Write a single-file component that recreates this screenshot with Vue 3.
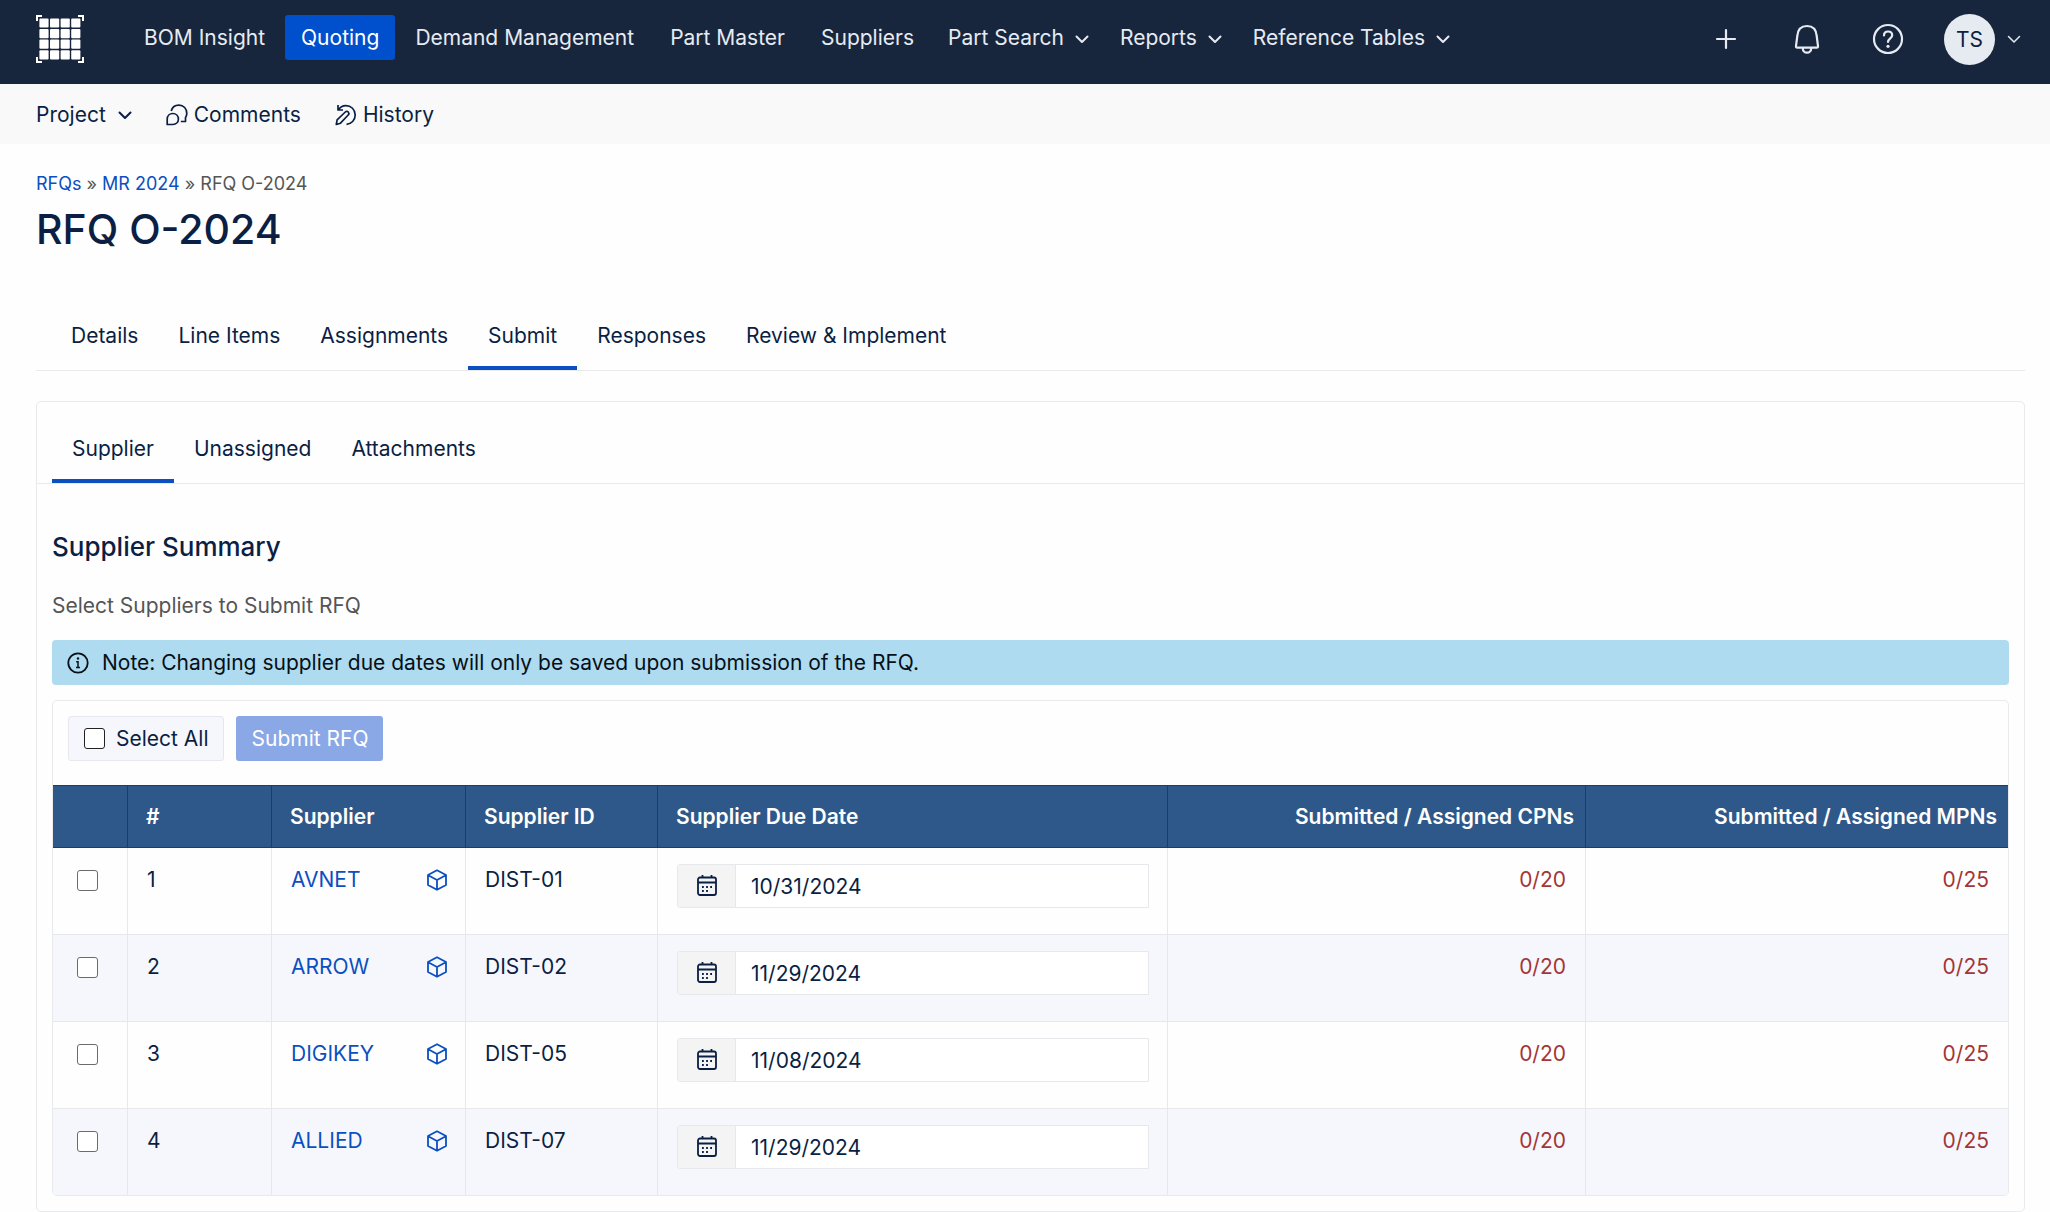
<script setup>
import { ref } from 'vue'

const navItems = [
  { label: 'BOM Insight' },
  { label: 'Quoting', active: true },
  { label: 'Demand Management' },
  { label: 'Part Master' },
  { label: 'Suppliers' },
  { label: 'Part Search', menu: true },
  { label: 'Reports', menu: true },
  { label: 'Reference Tables', menu: true }
]

const pageTabs = ['Details', 'Line Items', 'Assignments', 'Submit', 'Responses', 'Review & Implement']
const activePageTab = ref('Submit')

const cardTabs = ['Supplier', 'Unassigned', 'Attachments']
const activeCardTab = ref('Supplier')

const suppliers = ref([
  { name: 'AVNET', id: 'DIST-01', due: '10/31/2024', cpns: '0/20', mpns: '0/25', selected: false },
  { name: 'ARROW', id: 'DIST-02', due: '11/29/2024', cpns: '0/20', mpns: '0/25', selected: false },
  { name: 'DIGIKEY', id: 'DIST-05', due: '11/08/2024', cpns: '0/20', mpns: '0/25', selected: false },
  { name: 'ALLIED', id: 'DIST-07', due: '11/29/2024', cpns: '0/20', mpns: '0/25', selected: false }
])

const logoCells = [0, 1, 2, 3]
</script>

<template>
  <div class="page">
    <header class="topbar">
      <a href="#" class="logo" aria-label="Home">
        <svg width="48" height="48" viewBox="0 0 48 48">
          <g fill="#fff">
            <template v-for="r in logoCells" :key="r">
              <rect
                v-for="c in logoCells"
                :key="c"
                :x="3.4 + c * 10.6"
                :y="3.4 + r * 10.6"
                width="9.2"
                height="9.2"
                rx="1"
              />
            </template>
          </g>
          <path
            d="M1 6V1h5M42 1h5v5M47 42v5h-5M6 47H1v-5"
            fill="none"
            stroke="#fff"
            stroke-width="2"
          />
        </svg>
      </a>
      <nav class="main-nav" aria-label="Main">
        <a
          v-for="item in navItems"
          :key="item.label"
          href="#"
          class="nav-link"
          :class="{ active: item.active, menu: item.menu }"
        >
          {{ item.label }}
          <svg v-if="item.menu" class="chevron" width="14" height="14" viewBox="0 0 14 14" stroke-width="2">
            <path d="M1.5 4.5 7 10l5.5-5.5" />
          </svg>
        </a>
      </nav>
      <div class="tools">
        <button type="button" class="tool" aria-label="Add">
          <svg width="32" height="32" viewBox="0 0 32 32" stroke-width="2.2"><path d="M16 7v18M7 16h18" /></svg>
        </button>
        <button type="button" class="tool" aria-label="Notifications">
          <svg width="32" height="32" viewBox="0 0 32 32" stroke-width="2.2">
            <path d="M16 3C9.5 3 6.7 7.5 6.3 13L5 23c-.1 1.2.3 1.7 1.3 1.7h19.400c1 0 1.4-.5 1.3-1.7l-1.3-10C25.3 7.5 22.5 3 16 3zM11.8 25.5a4.2 4.2 0 0 0 8.4 0" />
          </svg>
        </button>
        <button type="button" class="tool" aria-label="Help">
          <svg width="32" height="32" viewBox="0 0 32 32" stroke-width="2.2">
            <circle cx="16" cy="16" r="14" />
            <path d="M12 12.5c0-2.4 1.7-4 4.1-4s4.1 1.5 4.1 3.7c0 3-4.2 3.3-4.2 6.8" />
            <circle cx="16" cy="23.3" r="1.6" class="dot" />
          </svg>
        </button>
        <button type="button" class="user" aria-label="Account">
          <span class="avatar">TS</span>
          <svg class="chevron" width="14" height="14" viewBox="0 0 14 14" stroke-width="1.5">
            <path d="M1.5 4.5 7 10l5.5-5.5" />
          </svg>
        </button>
      </div>
    </header>

    <div class="subbar">
      <button type="button" class="sub-item project">
        Project
        <svg class="chevron" width="14" height="14" viewBox="0 0 14 14" stroke-width="2">
          <path d="M1.5 4.5 7 10l5.5-5.5" />
        </svg>
      </button>
      <button type="button" class="sub-item">
        <svg class="line-icon" width="22" height="22" viewBox="0 0 22 22" stroke-width="1.7">
          <path d="M5.200 7A8 8 0 0 1 13 1.200c4.600 0 7.800 3.500 7.800 8 0 1.800-.6 3.200-1.300 4.400v3.900h-4.700" />
          <path d="M1.200 20.500v-5.300c0-3.300 2.400-5.700 5.600-5.700s5.600 2.400 5.600 5.600-2.400 5.400-5.600 5.400z" />
        </svg>
        Comments
      </button>
      <button type="button" class="sub-item">
        <svg class="line-icon" width="22" height="22" viewBox="0 0 22 22" stroke-width="1.7">
          <path d="M3 1v5h5M3.300 6C5 3.200 7.600 1.600 10.800 1.600c5.300 0 9.400 4 9.400 9.300 0 5.200-3.900 9.200-8.700 9.400" />
          <path d="m1.300 20.500.8-4.600L10.300 8c1-1 2.200-.9 3 0s.8 2-.1 3L5.500 19.200z" />
        </svg>
        History
      </button>
    </div>

    <main class="content">
      <nav class="breadcrumb" aria-label="Breadcrumb">
        <a href="#">RFQs</a> » <a href="#">MR 2024</a> » <span>RFQ O-2024</span>
      </nav>
      <h1>RFQ O-2024</h1>

      <div class="tabs page-tabs" role="tablist">
        <button
          v-for="tab in pageTabs"
          :key="tab"
          type="button"
          role="tab"
          class="tab"
          :class="{ active: tab === activePageTab }"
          :aria-selected="tab === activePageTab"
          @click="activePageTab = tab"
        >{{ tab }}</button>
      </div>

      <section class="card">
        <div class="tabs card-tabs" role="tablist">
          <button
            v-for="tab in cardTabs"
            :key="tab"
            type="button"
            role="tab"
            class="tab"
            :class="{ active: tab === activeCardTab }"
            :aria-selected="tab === activeCardTab"
            @click="activeCardTab = tab"
          >{{ tab }}</button>
        </div>

        <div class="card-body">
          <h2>Supplier Summary</h2>
          <p class="hint">Select Suppliers to Submit RFQ</p>
          <div class="note" role="note">
            <svg width="22" height="22" viewBox="0 0 22 22">
              <circle cx="11" cy="11" r="9.7" fill="none" stroke="currentColor" stroke-width="1.8" />
              <circle cx="11" cy="6.5" r="1.2" fill="currentColor" />
              <path d="M9.2 9.700H11v5.600M9 15.600h4" fill="none" stroke="currentColor" stroke-width="1.5" />
            </svg>
            Note: Changing supplier due dates will only be saved upon submission of the RFQ.
          </div>

          <div class="panel">
            <div class="actions">
              <label class="select-all"><input type="checkbox" /> Select All</label>
              <button type="button" class="submit" disabled>Submit RFQ</button>
            </div>
            <table>
              <colgroup>
                <col class="c-check" />
                <col class="c-num" />
                <col class="c-name" />
                <col class="c-id" />
                <col class="c-due" />
                <col class="c-cpn" />
                <col />
              </colgroup>
              <thead>
                <tr>
                  <th></th>
                  <th>#</th>
                  <th>Supplier</th>
                  <th>Supplier ID</th>
                  <th>Supplier Due Date</th>
                  <th class="right">Submitted / Assigned CPNs</th>
                  <th class="right">Submitted / Assigned MPNs</th>
                </tr>
              </thead>
              <tbody>
                <tr v-for="(s, i) in suppliers" :key="s.id">
                  <td class="check">
                    <input v-model="s.selected" type="checkbox" :aria-label="'Select ' + s.name" />
                  </td>
                  <td>{{ i + 1 }}</td>
                  <td>
                    <div class="supplier">
                      <a href="#">{{ s.name }}</a>
                      <svg width="22" height="22" viewBox="0 0 22 22" stroke-width="1.8">
                        <path d="M11 1.200 20 6v10l-9 4.800L2 16V6zM2.200 6.200 11 11l8.800-4.800M11 11v9.600" />
                      </svg>
                    </div>
                  </td>
                  <td>{{ s.id }}</td>
                  <td class="due">
                    <div class="date">
                      <span class="date-icon">
                        <svg width="20" height="22" viewBox="0 0 20 22" stroke-width="1.8">
                          <rect x="1" y="2.5" width="18" height="17.5" rx="2" />
                          <path d="M1 7.500h18M5.500 0v3M14.500 0v3" />
                          <path d="M5 12h1.800M9.100 12h1.800M13.200 12H15M5 16h1.800M9.100 16h1.800" />
                        </svg>
                      </span>
                      <input v-model="s.due" type="text" :aria-label="s.name + ' due date'" />
                    </div>
                  </td>
                  <td class="right count">{{ s.cpns }}</td>
                  <td class="right count">{{ s.mpns }}</td>
                </tr>
              </tbody>
            </table>
          </div>
        </div>
      </section>
    </main>
  </div>
</template>

<style>
body {
  margin: 0;
  background: #fefefe;
}
</style>

<style scoped>
.page {
  font-family: Inter, "Liberation Sans", sans-serif;
  font-size: 21px;
  line-height: 30px;
  color: #0b1f44;
}
.page *,
.page *::before {
  box-sizing: border-box;
}
a {
  color: #0b4fc0;
  text-decoration: none;
}
button,
input {
  font: inherit;
  color: inherit;
}
button {
  margin: 0;
  padding: 0;
  border: 0;
  background: none;
}
.chevron {
  fill: none;
  stroke: currentColor;
  stroke-linecap: round;
  stroke-linejoin: round;
}

/* Top bar */
.topbar {
  display: flex;
  align-items: center;
  height: 84px;
  padding: 0 29px 0 36px;
  background: #18263d;
  color: #e6ebf3;
}
.logo {
  display: flex;
  margin-bottom: 6px;
}
.main-nav {
  display: flex;
  gap: 4px;
  margin: 0 auto 9px 44px;
}
.nav-link {
  display: flex;
  align-items: center;
  height: 45px;
  padding: 0 16px;
  border-radius: 3px;
  color: inherit;
  white-space: nowrap;
}
.nav-link .chevron {
  margin: 2px 0 0 11px;
}
.nav-link.menu {
  padding: 0 13px 0 14px;
}
.nav-link.active {
  background: #0050cd;
  color: #fff;
}
.tools {
  display: flex;
  align-items: center;
  margin-bottom: 6px;
}
.tool {
  display: flex;
  margin-right: 49px;
}
.tool svg {
  fill: none;
  stroke: currentColor;
  stroke-linecap: round;
}
.tool .dot {
  fill: currentColor;
  stroke: none;
}
.user {
  display: flex;
  align-items: center;
  gap: 12px;
  margin-left: -9px;
}
.avatar {
  width: 51px;
  height: 51px;
  border-radius: 50%;
  background: #e6eaf1;
  color: #0b1f44;
  line-height: 51px;
  text-align: center;
}

/* Project bar */
.subbar {
  display: flex;
  align-items: center;
  height: 60px;
  padding: 1px 36px 0;
  background: #f9f9f9;
}
.sub-item {
  display: flex;
  align-items: center;
  gap: 6px;
  margin-right: 34px;
}
.sub-item.project {
  gap: 12px;
}
.line-icon {
  fill: none;
  stroke: currentColor;
  stroke-linejoin: round;
}

/* Page content */
.content {
  padding: 27px 25px 0 36px;
}
.breadcrumb {
  font-size: 18px;
  line-height: 26px;
  color: #555;
}
h1 {
  margin: 6px 0 0;
  font-size: 41px;
  line-height: 52px;
  font-weight: 500;
}
.tabs {
  display: flex;
  border-bottom: 1px solid #e9eaec;
}
.tab {
  padding: 0 20px 9px;
  line-height: 42px;
  border-bottom: 4px solid transparent;
}
.tab.active {
  border-bottom-color: #0b4fc0;
}
.page-tabs {
  margin-top: 60px;
  padding-left: 15px;
}
.card {
  margin-top: 30px;
  border: 1px solid #e9eaec;
  border-radius: 5px;
}
.card-tabs {
  padding: 26px 15px 0;
}
.card-body {
  padding: 46px 15px 15px;
}
h2 {
  margin: 0;
  font-size: 26px;
  line-height: 34px;
  font-weight: 500;
}
.hint {
  margin: 27px 0 19px;
  color: #555;
}
.note {
  display: flex;
  align-items: center;
  gap: 13px;
  height: 45px;
  padding: 0 15px;
  border-radius: 4px;
  background: #afdbf0;
  color: #061018;
}
.panel {
  margin-top: 15px;
  border: 1px solid #e9eaec;
  border-radius: 5px;
  overflow: hidden;
}
.actions {
  display: flex;
  gap: 12px;
  padding: 15px 15px 24px;
}
.select-all {
  display: flex;
  align-items: center;
  gap: 11px;
  height: 45px;
  padding: 0 15px;
  border: 1px solid #e6e8ee;
  border-radius: 3px;
  background: #f6f7fd;
}
.submit {
  height: 45px;
  padding: 0 15px;
  border-radius: 3px;
  background: #8aa8e6;
  color: #fff;
}
input[type="checkbox"] {
  appearance: none;
  display: block;
  width: 21px;
  height: 21px;
  margin: 0;
  border: 1px solid #6b6b6b;
  border-radius: 3px;
  background: #fff;
}
.select-all input[type="checkbox"] {
  border-color: #222;
}

/* Supplier table */
table {
  width: 100%;
  table-layout: fixed;
  border-collapse: separate;
  border-spacing: 0;
}
.c-check {
  width: 75px;
}
.c-num {
  width: 144px;
}
.c-name {
  width: 194px;
}
.c-id {
  width: 192px;
}
.c-due {
  width: 510px;
}
.c-cpn {
  width: 418px;
}
th {
  height: 63px;
  padding: 0 11px 0 18px;
  border: 1px solid #1f3d63;
  border-width: 1px 1px 1px 0;
  background: #2e5889;
  color: #fff;
  font-weight: 600;
  text-align: left;
}
td {
  height: 87px;
  padding: 17px 19px 0;
  border: 1px solid #e6e8ec;
  border-width: 0 1px 1px 0;
  vertical-align: top;
}
tbody tr:nth-child(even) {
  background: #f6f7fd;
}
th:last-child,
td:last-child {
  border-right: 0;
}
tbody tr:last-child td {
  border-bottom: 0;
  height: 86px;
}
.right {
  text-align: right;
}
.count {
  color: #a33636;
}
.check {
  padding: 22px 0 0 24px;
}
.supplier {
  display: flex;
  align-items: center;
  justify-content: space-between;
}
.supplier svg {
  margin-right: -2px;
  fill: none;
  stroke: #0b4fc0;
  stroke-linejoin: round;
}
.due {
  padding: 16px 18px 0 19px;
}
.date {
  display: flex;
  height: 44px;
  border: 1px solid #e6e8ec;
  border-radius: 3px 0 0 3px;
  background: #fff;
}
.date-icon {
  display: flex;
  align-items: center;
  justify-content: center;
  width: 58px;
  border-right: 1px solid #e6e8ec;
  background: #f4f4f4;
}
.date-icon svg {
  fill: none;
  stroke: currentColor;
}
.date input {
  flex: 1;
  min-width: 0;
  padding: 1px 15px 0;
  border: 0;
  background: none;
  outline: none;
}
</style>
